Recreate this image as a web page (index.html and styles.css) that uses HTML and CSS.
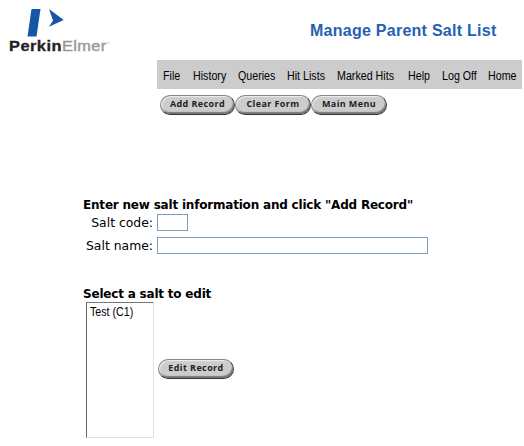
FILE: index.html
```html
<!DOCTYPE html>
<html lang="en">
<head>
<meta charset="utf-8">
<title>Manage Parent Salt List</title>
<link rel="stylesheet" href="styles.css">
</head>
<body>
<header class="header">
  <div class="brand">
    <svg class="mark" width="40" height="29" viewBox="0 0 40 29"><path d="M5.5 1H14.5L10.5 28.5H1.5ZM23 1L37.7 12L23 18.8L27 12.5Z" fill="#1656a8"/></svg>
    <div class="wordmark"><b>Perkin</b><span>Elmer</span><i>’</i></div>
  </div>
  <h1 class="title">Manage Parent Salt List</h1>
</header>
<nav class="menu">
  <a>File</a><a>History</a><a>Queries</a><a>Hit Lists</a><a>Marked Hits</a><a>Help</a><a>Log Off</a><a>Home</a>
</nav>
<div class="actions">
  <button class="pill">Add Record</button><button class="pill">Clear Form</button><button class="pill">Main Menu</button>
</div>
<main class="content">
  <h2 class="heading heading-new">Enter new salt information and click "Add Record"</h2>
  <div class="field field-code"><label for="code">Salt code:</label><input id="code" class="code"></div>
  <div class="field field-name"><label for="name">Salt name:</label><input id="name" class="name"></div>
  <h2 class="heading heading-edit">Select a salt to edit</h2>
  <div class="edit">
    <div class="list"><div class="option">Test (C1)</div></div>
    <button class="pill">Edit Record</button>
  </div>
</main>
</body>
</html>
```
FILE: styles.css
```css
* { box-sizing: border-box; }
body { margin: 0; width: 524px; height: 446px; overflow: hidden; background: #fff; color: #000; font-family: "Liberation Sans", Arial, sans-serif; }
.header { display: flex; height: 60px; }
.brand { width: 310px; padding: 8px 0 0 9px; }
.mark { display: block; margin-left: 17px; }
.wordmark { display: flex; font-size: 14px; line-height: 19px; white-space: nowrap; transform: scaleX(1.17); transform-origin: left; }
.wordmark b { color: #222; letter-spacing: .4px; -webkit-text-stroke: .3px #222; }
.wordmark span { color: #999; letter-spacing: .35px; -webkit-text-stroke: .4px #999; }
.wordmark i { color: #999; font-size: 8px; line-height: 15px; }
.title { margin: 21px 0 0; color: #2460b4; font-size: 16px; line-height: 20px; white-space: nowrap; letter-spacing: .26px; }
.menu { display: grid; grid-template-columns: 30px 45px 49px 50px 71px 34px 46px 34px; width: 365px; height: 29px; margin-left: 157px; padding-left: 6px; background: #ccc; }
.menu a { font-size: 12px; line-height: 32px; white-space: nowrap; transform: scaleX(.89); transform-origin: left; }
.actions { display: flex; height: 20px; margin: 6px 0 0 160px; }
.pill { width: 76px; height: 20px; margin: 0; padding: 0 0 2px; border: 1px solid; border-color: #888 #444 #333 #888; border-radius: 10px; background: #ccc; box-shadow: inset 1px 1px 1px #eee, inset -1px -2px 1px #777; color: #222; font: bold 9px/14px "Open Sans", sans-serif; letter-spacing: .4px; white-space: nowrap; }
.actions .pill:first-child { width: 75px; }
.content { padding: 82px 0 0 83px; font-family: "DejaVu Sans", Verdana, sans-serif; }
.heading { margin: 0; font-size: 12px; line-height: 16px; letter-spacing: -.2px; white-space: nowrap; }
.field { display: flex; font-size: 12.4px; }
.field label { width: 74px; padding-right: 4px; text-align: right; white-space: nowrap; }
.field input { height: 17px; border: 1px solid #7f9db9; background: #fff; padding: 0; outline: 0; }
.field-code { margin-top: 1px; line-height: 18px; }
.field-name { margin-top: 5px; line-height: 17px; }
.field .code { width: 31px; }
.field .name { width: 271px; }
.heading-edit { margin-top: 32px; }
.edit { display: flex; align-items: center; gap: 4px; margin: 0 0 0 3px; }
.list { width: 68px; height: 136px; border: 1px solid; border-color: #777 #e4e2d4 #e4e2d4 #666; padding: 2px 0 0 3px; }
.option { font: 12px/14px "Liberation Sans", sans-serif; transform: scaleX(.89); transform-origin: left; white-space: nowrap; }
.edit .pill { position: relative; top: -1px; }
```
